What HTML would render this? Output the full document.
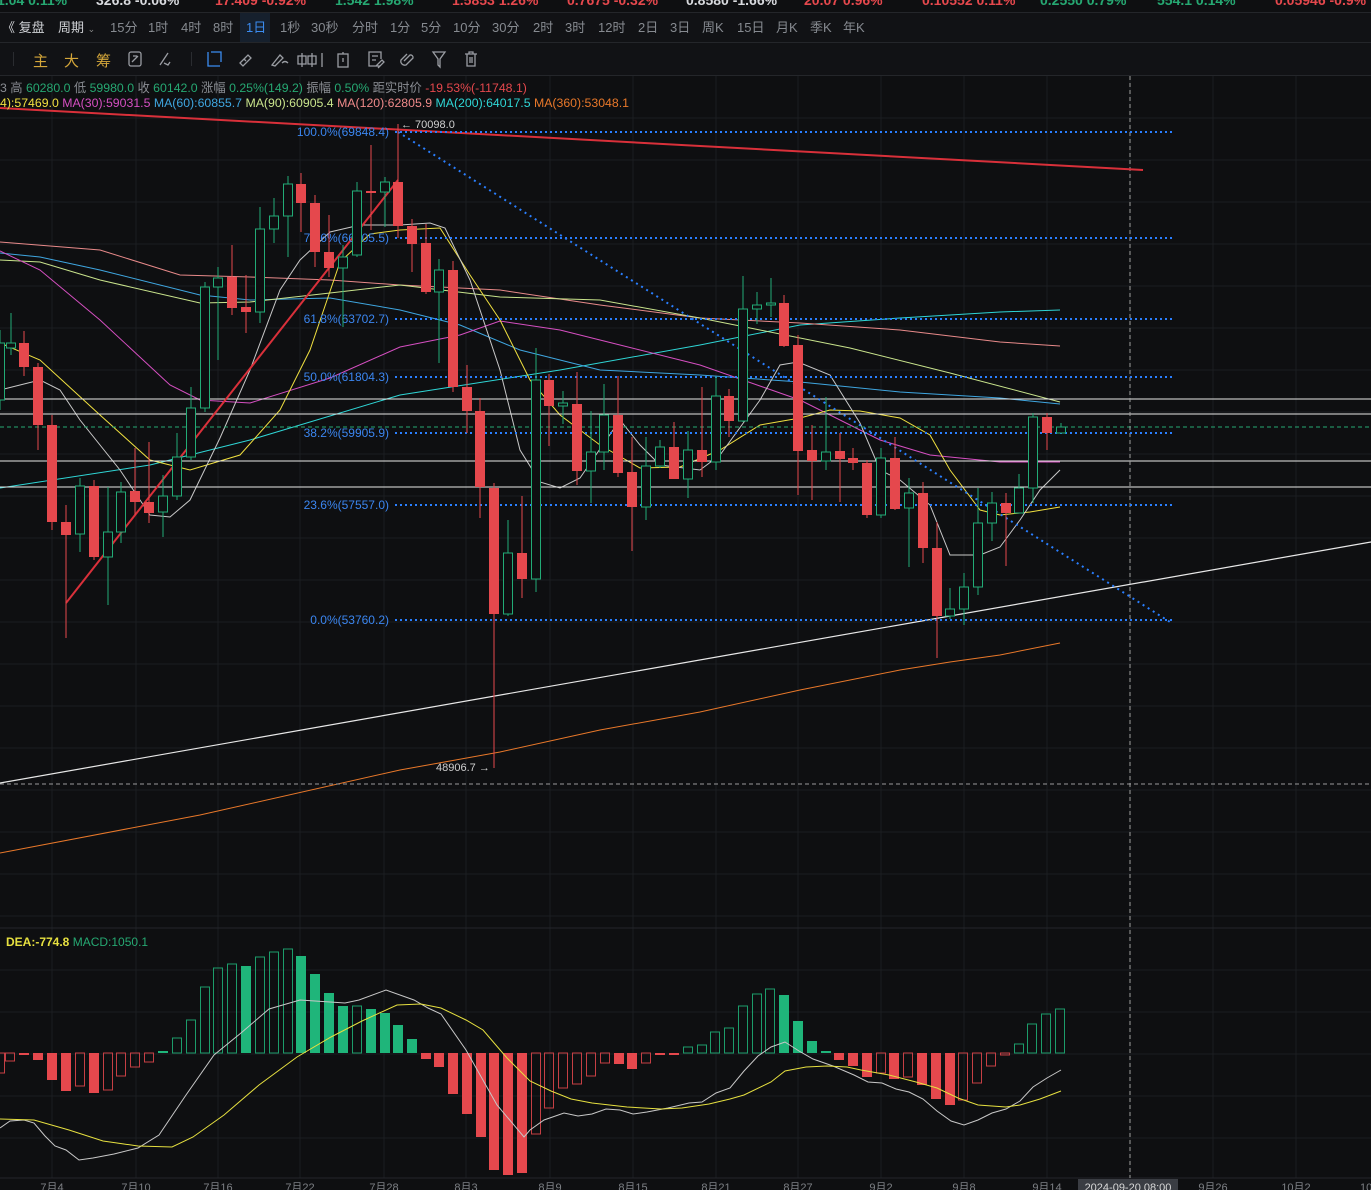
<!DOCTYPE html>
<html><head><meta charset="utf-8">
<style>
html,body{margin:0;padding:0;background:#0e0f11;width:1371px;height:1190px;overflow:hidden;font-family:"Liberation Sans","Noto Sans CJK SC",sans-serif;}
#svg{position:absolute;left:0;top:0;}
.t{position:absolute;white-space:nowrap;}
#tick{position:absolute;left:0;top:0;width:1371px;height:12px;overflow:hidden;background:#0e0f11;border-bottom:1px solid #24262a;}
#tick span{position:absolute;top:-8px;font-size:14px;font-weight:bold;}
#bar1{position:absolute;left:0;top:13px;width:1371px;height:29px;background:#111215;border-bottom:1px solid #24262a;font-size:13px;color:#868a90;}
#bar1 span{position:absolute;top:4px;}
#bar2{position:absolute;left:0;top:43px;width:1371px;height:32px;background:#111215;border-bottom:1px solid #24262a;}
.g{color:#26a872}.r{color:#e5484d}.w{color:#d8dade}
#info{position:absolute;left:0;top:78px;font-size:12.3px;color:#8a8d93;}
#ma{position:absolute;left:0;top:96px;font-size:12.3px;}
</style></head><body>
<svg id="svg" width="1371" height="1190" xmlns="http://www.w3.org/2000/svg"></svg>
<div id="tick">
<span class="g" style="left:-3px">1.04 0.11%</span>
<span class="w" style="left:96px">326.8 -0.06%</span>
<span class="r" style="left:215px">17.409 -0.92%</span>
<span class="g" style="left:335px">1.542 1.98%</span>
<span class="r" style="left:452px">1.5853 1.26%</span>
<span class="r" style="left:567px">0.7675 -0.32%</span>
<span class="w" style="left:686px">0.8580 -1.66%</span>
<span class="r" style="left:804px">20.07 0.96%</span>
<span class="r" style="left:922px">0.10552 0.11%</span>
<span class="g" style="left:1040px">0.2550 0.79%</span>
<span class="g" style="left:1157px">554.1 0.14%</span>
<span class="r" style="left:1275px">0.05946 -0.9%</span>
</div>
<div id="bar1">
<span style="left:2px;color:#d0d2d6">《 复盘</span>
<span style="left:58px;color:#d0d2d6">周期 <span style="position:static;font-size:9px;color:#888">⌄</span></span>
<span style="left:110px">15分</span><span style="left:148px">1时</span><span style="left:181px">4时</span><span style="left:213px">8时</span>
<span style="left:240px;top:0;width:30px;height:29px;background:#16202d"></span>
<span style="left:246px;color:#3b8cf0">1日</span>
<span style="left:280px">1秒</span><span style="left:311px">30秒</span><span style="left:352px">分时</span><span style="left:390px">1分</span><span style="left:421px">5分</span><span style="left:453px">10分</span><span style="left:492px">30分</span><span style="left:533px">2时</span><span style="left:565px">3时</span><span style="left:598px">12时</span><span style="left:638px">2日</span><span style="left:670px">3日</span><span style="left:702px">周K</span><span style="left:737px">15日</span><span style="left:776px">月K</span><span style="left:810px">季K</span><span style="left:843px">年K</span>
</div>
<div id="bar2">
<div style="position:absolute;left:13px;top:9px;width:1px;height:14px;background:#2a2c30"></div>
<span class="t" style="left:33px;top:7px;font-size:15px;color:#d4a63a">主</span>
<span class="t" style="left:64px;top:7px;font-size:15px;color:#d4a63a">大</span>
<span class="t" style="left:96px;top:7px;font-size:15px;color:#d4a63a">筹</span>
<div style="position:absolute;left:191px;top:9px;width:1px;height:14px;background:#2a2c30"></div>
<svg style="position:absolute;left:0;top:0" width="500" height="32" fill="none" stroke-width="1.3">
<g stroke="#9a9da3">
<rect x="129" y="9" width="12" height="14" rx="2"/><path d="M132 19l6-6M133 13h4"/>
<path d="M160 22l8-12M164 20l4 2l2-3"/>
</g>
<g stroke="#3b8cf0"><path d="M208 9v14h12M211 9h10v10"/></g>
<g stroke="#9a9da3">
<path d="M240 20l8-8l3 3l-8 8l-3-3zM244 16l2 2"/>
<path d="M272 22l8-10l3 3l-8 8zM282 20q3-3 6 0"/>
<path d="M302 10v14M306 13h-8v8h8zM312 10v14M316 13h-8v8h8zM322 10v14"/>
<rect x="338" y="11" width="10" height="13"/><path d="M343 9v2M343 15v4"/>
<path d="M380 23h-11v-14h12v7M372 13h6M372 17h4M376 23l6-6l2 2l-6 6"/>
<path d="M404 18l6-6a2.5 2.5 0 0 1 3 3l-7 7a4 4 0 0 1-5-5l6-6"/>
<path d="M433 9h12l-5 7v8l-2-2v-6z"/>
<path d="M465 11h12M469 11v-2h4v2M467 11v12h8v-12M470 14v6M472 14v6"/>
</g></svg>
</div>
<div id="info">3 高 <span class="g">60280.0</span> 低 <span class="g">59980.0</span> 收 <span class="g">60142.0</span> 涨幅 <span class="g">0.25%(149.2)</span> 振幅 <span class="g">0.50%</span> 距实时价 <span class="r">-19.53%(-11748.1)</span></div>
<div id="ma"><span style="color:#f0e040">4):57469.0</span> <span style="color:#d54fc1">MA(30):59031.5</span> <span style="color:#3fa6e0">MA(60):60855.7</span> <span style="color:#c9e48c">MA(90):60905.4</span> <span style="color:#f08a8a">MA(120):62805.9</span> <span style="color:#2fd6d6">MA(200):64017.5</span> <span style="color:#e8782a">MA(360):53048.1</span></div>
<div class="t" style="left:6px;top:935px;font-size:12px;font-weight:bold;color:#e6e040">DEA:-774.8 <span style="color:#26a872;font-weight:normal">MACD:1050.1</span></div>
<script>
var S=document.getElementById('svg'),h='';
function L(x1,y1,x2,y2,c,w,d){h+='<line x1="'+x1+'" y1="'+y1+'" x2="'+x2+'" y2="'+y2+'" stroke="'+c+'" stroke-width="'+(w||1)+'"'+(d?' stroke-dasharray="'+d+'"':'')+'/>';}
function P(pts,c,w,d){h+='<polyline fill="none" points="'+pts.map(function(p){return p.join(',')}).join(' ')+'" stroke="'+c+'" stroke-width="'+(w||1)+'"'+(d?' stroke-dasharray="'+d+'"':'')+'/>';}
for(var y=118;y<925;y+=42)L(0,y,1371,y,'#1b1d21');
for(var y=970;y<1178;y+=42)L(0,y,1371,y,'#1b1d21');
var dates=[52,136,218,300,384,466,550,633,716,798,881,964,1047,1130,1213,1296];
dates.forEach(function(x){L(x,76,x,1178,'#1b1d21');});
L(0,928,1371,928,'#24262a');L(0,1178,1371,1178,'#24262a');
P([[0,488],[150,465],[250,440],[400,395],[560,370],[700,345],[800,325],[900,318],[1000,312],[1060,310]],'#2fd6d6');
P([[0,242],[100,250],[180,275],[250,277],[330,280],[400,285],[500,290],[600,305],[700,318],[800,323],[900,330],[1000,342],[1060,346]],'#e88a8a');
P([[0,253],[40,257],[100,270],[200,295],[250,300],[330,298],[400,310],[460,325],[520,350],[600,370],[700,375],[800,382],[900,392],[1000,398],[1060,404]],'#3fa6e0');
P([[0,260],[40,262],[100,280],[200,303],[250,302],[330,293],[400,285],[500,297],[600,300],[700,318],[760,330],[850,348],[950,373],[1060,402]],'#c9e48c');
P([[0,251],[40,270],[100,320],[170,385],[200,400],[250,403],[330,378],[400,347],[460,335],[500,321],[560,330],[620,345],[700,365],[800,400],[880,440],[930,455],[1000,462],[1060,462]],'#d54fc1');
P([[0,343],[40,360],[100,415],[150,460],[190,470],[240,455],[280,410],[310,350],[340,262],[370,234],[400,230],[440,228],[470,275],[500,320],[530,380],[560,415],[600,445],[640,468],[680,467],[720,450],[760,425],[800,418],[830,410],[860,411],[900,418],[930,435],[950,470],[980,510],[1000,515],[1030,512],[1060,507]],'#f0e040');
P([[0,390],[20,385],[40,380],[60,390],[80,420],[120,470],[150,515],[170,517],[190,500],[220,438],[250,370],[280,290],[300,260],[330,232],[360,225],[400,225],[430,223],[445,228],[470,280],[500,370],[520,450],[540,482],[560,488],[580,478],[620,420],[640,445],[660,465],[700,470],[720,455],[760,400],[780,365],[798,362],[830,375],[860,423],[880,470],[900,480],[930,505],[950,555],[980,555],[1000,547],[1020,520],[1040,490],[1060,470]],'#c8c8c8');
P([[0,853],[200,815],[400,770],[500,752],[600,730],[700,712],[800,690],[900,670],[950,662],[1000,655],[1060,643]],'#e8782a');
[399,414,461,487].forEach(function(y){L(0,y,1371,y,'#e8e8e8');});
L(0,427,1371,427,'#26a872',1,'4 3');
L(0,784,1371,784,'#9a9a9a',1,'4 3');
L(1130,76,1130,1178,'#a0a0a0',1,'4 3');
L(0,108,1143,170,'#d9303a',2);
L(66,603,398,180,'#d9303a',2);
L(0,783,1371,542,'#e8e8e8',1.2);
L(398,132,1170,622,'#2a7fff',2,'2 4');
var fib=[[132,'100.0%(69848.4)'],[238,'78.6%(66405.5)'],[319,'61.8%(63702.7)'],[377,'50.0%(61804.3)'],[433,'38.2%(59905.9)'],[505,'23.6%(57557.0)'],[620,'0.0%(53760.2)']];
fib.forEach(function(f){L(395,f[0],1172,f[0],'#2a7fff',2,'2 3');h+='<text x="389" y="'+(f[0]+4)+'" text-anchor="end" font-size="12" fill="#3b86f0" font-family="Liberation Sans,sans-serif">'+f[1]+'</text>';});
var C=[[0,343,400,330,410,1],[11,343,348,313,355,1],[24,343,367,331,376,0],[38,367,425,363,450,0],[52,425,522,415,530,0],[66,522,535,505,638,0],[80,486,534,478,552,1],[94,486,557,480,560,0],[108,532,557,487,605,1],[121,492,532,482,543,1],[135,491,502,448,515,0],[149,502,513,442,523,0],[163,496,512,475,537,1],[177,457,496,433,500,1],[191,408,457,387,460,1],[205,287,408,282,412,1],[218,278,287,267,360,1],[232,277,308,245,315,0],[246,307,312,275,333,0],[260,229,312,207,323,1],[274,216,229,198,243,1],[288,184,216,176,257,1],[301,184,203,173,232,0],[315,203,252,195,267,0],[329,252,268,215,277,0],[343,257,268,245,327,1],[357,191,255,182,257,1],[371,191,193,145,230,0],[385,182,192,177,227,1],[398,182,226,124,238,0],[412,226,244,219,272,0],[426,243,292,224,294,0],[439,270,292,259,363,1],[453,270,387,261,392,0],[467,387,411,365,433,0],[480,411,487,398,518,0],[494,488,614,483,768,0],[508,553,614,520,616,1],[522,553,579,496,598,0],[536,380,579,348,592,1],[549,380,406,374,446,0],[563,403,406,391,424,1],[577,404,471,372,485,0],[591,452,471,411,503,1],[604,415,452,384,470,1],[618,415,473,376,477,0],[632,472,507,437,551,0],[646,466,507,437,520,1],[660,447,466,440,468,1],[674,447,479,422,479,0],[688,450,479,431,498,1],[702,450,462,387,477,0],[716,396,462,376,470,1],[729,396,421,389,437,0],[743,309,421,276,422,1],[757,305,309,292,324,1],[771,303,305,278,317,1],[784,303,346,295,347,0],[798,345,451,335,495,0],[812,450,461,425,500,0],[826,452,461,397,470,1],[840,451,459,433,502,0],[853,458,463,448,470,0],[867,463,515,460,518,0],[881,458,515,448,518,1],[895,458,509,437,510,0],[909,493,508,478,567,1],[923,493,548,482,563,0],[937,548,616,522,658,0],[950,609,616,588,619,1],[964,587,609,573,625,1],[978,523,587,488,595,1],[992,503,523,492,541,1],[1006,503,513,493,566,0],[1019,488,513,474,513,1],[1033,417,488,413,503,1],[1047,417,433,413,450,0],[1061,427,433,423,433,1]];
C.forEach(function(c){var x=c[0],g=c[5],col=g?'#22ab76':'#e5484d';
L(x,c[3],x,c[1],col);L(x,c[2],x,c[4],col);
var bh=Math.max(c[2]-c[1],1.5);
if(g)h+='<rect x="'+(x-4.5)+'" y="'+c[1]+'" width="9" height="'+bh+'" fill="#0e0f11" stroke="'+col+'" stroke-width="1"/>';
else h+='<rect x="'+(x-5)+'" y="'+c[1]+'" width="10" height="'+bh+'" fill="'+col+'"/>';});
h+='<text x="401" y="128" font-size="11" fill="#d0d0d0" font-family="Liberation Sans,sans-serif">← 70098.0</text>';
h+='<text x="436" y="771" font-size="11" fill="#d0d0d0" font-family="Liberation Sans,sans-serif">48906.7 →</text>';
var Z=1053;
var M=[[0,-20,0],[10,-8,0],[24,-2,1],[38,-7,1],[52,-27,1],[66,-38,1],[80,-33,0],[94,-40,1],[108,-37,0],[121,-23,0],[135,-14,0],[149,-9,0],[163,2,1],[177,15,0],[191,33,0],[205,66,0],[218,85,0],[232,89,0],[246,87,1],[260,96,0],[274,101,0],[288,104,0],[301,97,1],[315,79,1],[329,60,1],[343,47,1],[357,47,0],[371,44,1],[385,40,1],[398,28,1],[412,14,1],[426,-6,1],[439,-14,1],[453,-41,1],[467,-61,1],[481,-84,1],[494,-117,1],[508,-122,1],[522,-120,1],[536,-81,0],[549,-55,0],[563,-35,0],[577,-31,0],[591,-23,0],[605,-10,0],[619,-11,1],[632,-16,1],[646,-10,0],[660,-2,1],[674,-2,1],[688,6,0],[702,8,0],[715,21,0],[729,25,0],[743,47,0],[757,59,0],[770,64,0],[784,58,1],[798,32,1],[812,12,1],[826,2,1],[839,-7,1],[853,-13,1],[867,-24,1],[881,-20,0],[894,-26,1],[908,-24,0],[922,-32,1],[936,-46,1],[950,-52,1],[963,-47,0],[977,-30,0],[991,-13,0],[1005,-2,0],[1019,9,0],[1032,29,0],[1046,39,0],[1060,44,0]];
M.forEach(function(m){var x=m[0],v=m[1],col=v>=0?'#1fb57a':'#e5484d';var y=v>=0?Z-v:Z,hh=Math.max(Math.abs(v),1.5);
if(m[2])h+='<rect x="'+(x-5)+'" y="'+y+'" width="10" height="'+hh+'" fill="'+col+'"/>';
else h+='<rect x="'+(x-4.5)+'" y="'+y+'" width="9" height="'+hh+'" fill="none" stroke="'+col+'" stroke-width="1" stroke-opacity="0.85"/>';});
P([[0,1128],[10,1121],[24,1120],[34,1123],[45,1136],[55,1146],[66,1150],[79,1160],[93,1158],[114,1154],[138,1148],[159,1135],[186,1095],[214,1055],[241,1033],[269,1009],[300,1000],[345,1003],[359,1000],[386,990],[414,1000],[428,1008],[441,1014],[466,1050],[497,1105],[524,1137],[530,1130],[544,1120],[564,1113],[578,1116],[592,1114],[606,1109],[620,1110],[633,1114],[647,1112],[668,1108],[689,1103],[702,1102],[716,1093],[730,1088],[744,1071],[758,1056],[771,1047],[785,1042],[799,1051],[813,1059],[833,1066],[854,1075],[868,1082],[882,1083],[896,1089],[909,1092],[923,1099],[937,1111],[951,1121],[964,1125],[978,1120],[992,1113],[1006,1109],[1020,1101],[1033,1087],[1047,1078],[1061,1070]],'#c8c8c8');
P([[0,1119],[34,1120],[69,1130],[103,1141],[138,1146],[172,1147],[193,1137],[224,1115],[259,1085],[297,1057],[331,1037],[362,1021],[397,1005],[421,1004],[441,1008],[466,1020],[483,1030],[507,1058],[530,1081],[551,1091],[571,1099],[592,1103],[627,1107],[661,1109],[682,1108],[709,1104],[730,1099],[744,1095],[771,1082],[785,1071],[806,1067],[827,1066],[847,1067],[861,1070],[889,1075],[916,1082],[937,1088],[958,1098],[978,1105],[1006,1107],[1020,1105],[1040,1099],[1061,1091]],'#e6e040');
var lab=['7月4','7月10','7月16','7月22','7月28','8月3','8月9','8月15','8月21','8月27','9月2','9月8','9月14'];
lab.forEach(function(t,i){h+='<text x="'+dates[i]+'" y="1191" text-anchor="middle" font-size="11" fill="#7d8085" font-family="Liberation Sans,Noto Sans CJK SC,sans-serif">'+t+'</text>';});
h+='<rect x="1078" y="1179" width="100" height="11" fill="#3a3d43"/><text x="1128" y="1191" text-anchor="middle" font-size="11" fill="#d8d8d8" font-family="Liberation Sans,sans-serif">2024-09-20 08:00</text>';
h+='<text x="1213" y="1191" text-anchor="middle" font-size="11" fill="#7d8085" font-family="Liberation Sans,Noto Sans CJK SC,sans-serif">9月26</text>';
h+='<text x="1296" y="1191" text-anchor="middle" font-size="11" fill="#7d8085" font-family="Liberation Sans,Noto Sans CJK SC,sans-serif">10月2</text>';
h+='<text x="1360" y="1191" font-size="11" fill="#7d8085" font-family="Liberation Sans,sans-serif">10</text>';
S.innerHTML=h;
</script>
</body></html>
